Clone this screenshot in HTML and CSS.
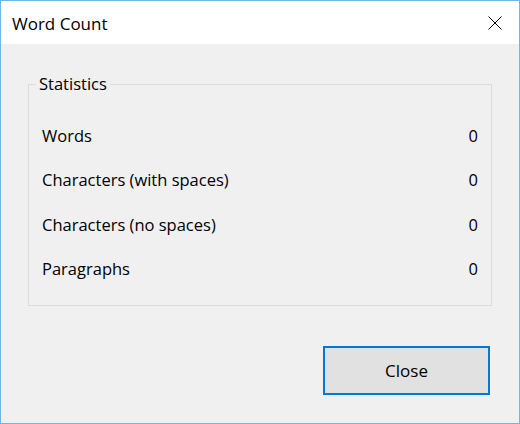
FILE: index.html
```html
<!DOCTYPE html>
<html>
<head>
<meta charset="utf-8">
<link rel="stylesheet" href="styles.css">
</head>
<body>
<div class="window">
  <div class="titlebar">
    <span class="title">Word Count</span>
    <span class="close-x">
      <svg width="14" height="14" viewBox="0 0 14 14"><path d="M0.5 0.5 L13.5 13.5 M13.5 0.5 L0.5 13.5" stroke="#000" stroke-width="1" fill="none"/></svg>
    </span>
  </div>
  <div class="content">
    <fieldset class="group">
      <legend class="legend">Statistics</legend>
      <div class="row"><span>Words</span><span>0</span></div>
      <div class="row"><span>Characters (with spaces)</span><span>0</span></div>
      <div class="row"><span>Characters (no spaces)</span><span>0</span></div>
      <div class="row"><span>Paragraphs</span><span>0</span></div>
    </fieldset>
    <div class="actions">
      <button class="btn">Close</button>
    </div>
  </div>
</div>
</body>
</html>
```
FILE: styles.css
```css
html, body {
  margin: 0;
  padding: 0;
}
body {
  font-family: "Open Sans", "Noto Sans", sans-serif;
  font-size: 16.5px;
  color: #000;
}
.window {
  width: 520px;
  height: 424px;
  box-sizing: border-box;
  border: 1px solid #6fb6e9;
  display: flex;
  flex-direction: column;
  background: #f0f0f0;
}
.titlebar {
  height: 43px;
  background: #fff;
  display: flex;
  align-items: center;
  justify-content: space-between;
  padding: 0 17px 0 11px;
  flex: none;
}
.title {
  font-size: 17px;
  line-height: 22px;
  margin-top: 2px;
}
.close-x {
  display: flex;
  margin-top: 1px;
}
.content {
  flex: 1;
  display: flex;
  flex-direction: column;
  padding: 29px 27px 28px 27px;
}
.group {
  margin: 0;
  border: 1px solid #dcdcdc;
  padding: 19px 13px 14px 13px;
  min-width: 0;
}
.legend {
  padding: 0 3px;
  margin-left: -6px;
  line-height: 22px;
}
.row {
  height: 44px;
  display: flex;
  align-items: center;
  justify-content: space-between;
  line-height: 22px;
}
.row + .row {
  margin-top: 0.33px;
}
.actions {
  margin-top: auto;
  display: flex;
  justify-content: flex-end;
  padding-right: 2px;
}
.btn {
  width: 167px;
  height: 49px;
  box-sizing: border-box;
  border: 2px solid #0078d7;
  background: #e1e1e1;
  font-family: inherit;
  font-size: 17px;
  color: #000;
  padding: 0;
}
```
